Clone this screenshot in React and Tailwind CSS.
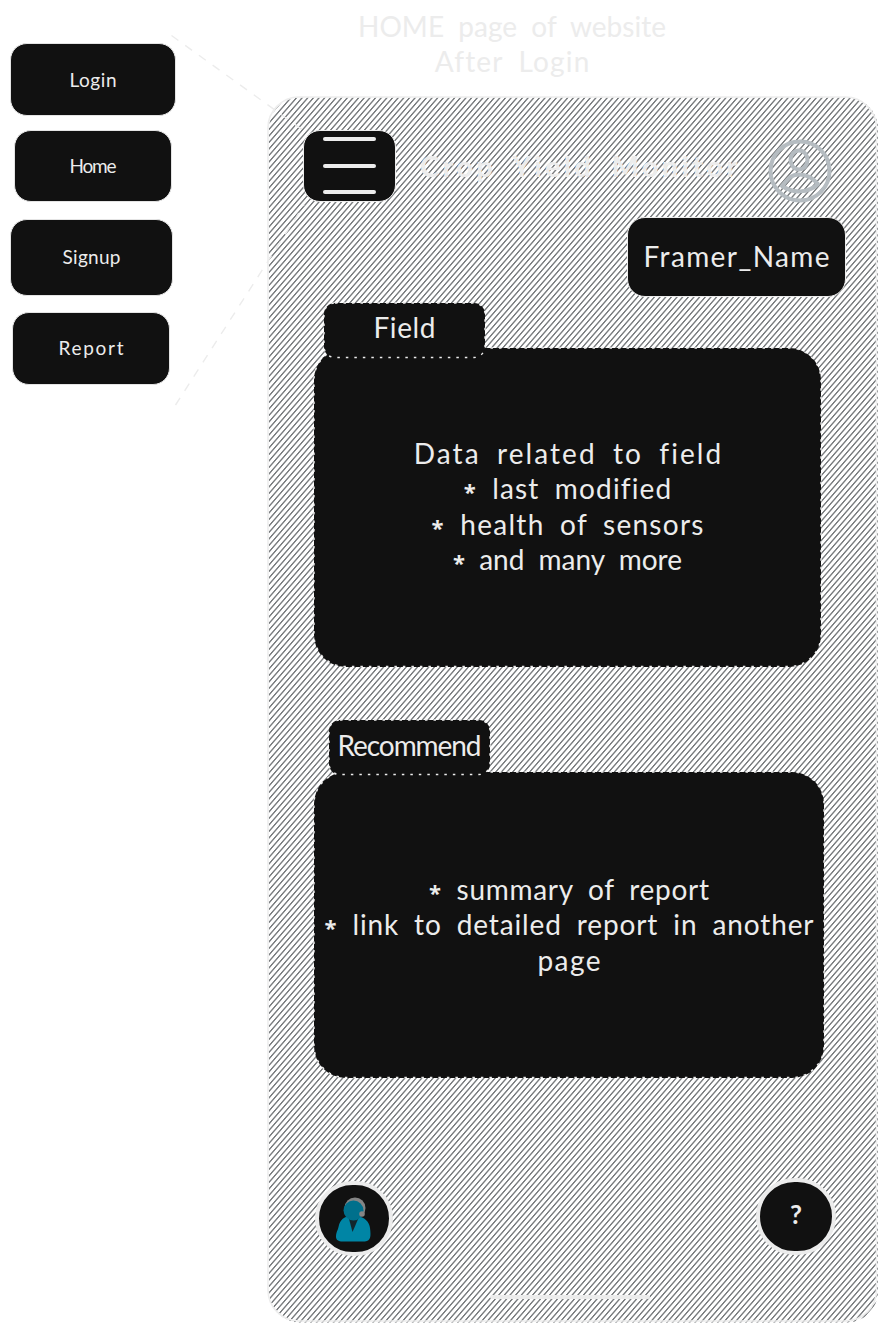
import React from "react";

// Letter spacing is computed so each label fills its hand-lettered width.
function Line({ children, w, className = "" }) {
  const ref = React.useRef(null);
  const [ls, setLs] = React.useState(0);
  React.useLayoutEffect(() => {
    const natural = ref.current.getBoundingClientRect().width;
    setLs((w - natural) / (children.length - 1));
  }, []);
  const star = children.startsWith("*");
  return (
    <span className={"block whitespace-pre " + className}>
      <span ref={ref} className="inline-block [word-spacing:7px]" style={{ letterSpacing: ls, marginRight: -ls }}>
        {star && <span className="align-[-1px] font-['Open_Sans',sans-serif] text-[22px] font-bold leading-[0]">*</span>}
        {star ? children.slice(1) : children}
      </span>
    </span>
  );
}

const tabs = [
  { t: "Login", w: 47, c: "ml-[10px] mt-[43px] h-[73px] w-[166px]" },
  { t: "Home", w: 47, c: "ml-[14px] mt-[14px] h-[72px] w-[158px]" },
  { t: "Signup", w: 58, c: "ml-[10px] mt-[17px] h-[77px] w-[163px] pb-[2px]" },
  { t: "Report", w: 65, c: "ml-[12px] mt-[16px] h-[73px] w-[158px] pb-[2px]" },
];

function Hatch() {
  return (
    <svg className="absolute inset-0 -z-10" width="613" height="1230" viewBox="0 0 613 1230">
      <defs>
        <pattern id="hatch" width="5.65" height="20" patternUnits="userSpaceOnUse" patternTransform="skewX(-41)">
          <path d="M2.8 0V20" stroke="#11161a" strokeWidth="1.05" />
        </pattern>
      </defs>
      <rect x="2" y="1.5" width="609" height="1225" rx="31" fill="url(#hatch)" />
      <rect x="1" y="1" width="608.5" height="1224" rx="31" fill="none" stroke="#ededed" strokeWidth="1.6" />
    </svg>
  );
}

export default function App() {
  return (
    <div className="relative flex h-[1330px] w-[886px] overflow-hidden bg-white font-['Lato',sans-serif] text-[#ececec]">
      <nav className="w-[267px] shrink-0">
        {tabs.map((b) => (
          <button key={b.t} className={"flex items-center justify-center rounded-[17px] border border-[#e4e4e4] bg-[#111] text-[19px] leading-6 " + b.c}>
            <Line w={b.w}>{b.t}</Line>
          </button>
        ))}
      </nav>

      <div className="w-[612px] shrink-0">
        <h1 className="flex h-[96px] w-[490px] flex-col items-center pt-[9px] text-[28px] leading-[35px]">
          <Line w={308}>HOME page of website</Line>
          <Line w={154}>After Login</Line>
        </h1>

        <main className="relative isolate h-[1228px] w-[612px]">
          <Hatch />
          <header className="flex pl-[36px] pt-[34px]">
            <button className="flex h-[72px] w-[93px] flex-col items-center justify-between rounded-[17px] border border-[#ededed] bg-[#111] pb-[7px] pt-[6px]">
              <i className="h-[4px] w-[53px] rounded-full bg-[#ececec]" />
              <i className="h-[4px] w-[53px] rounded-full bg-[#ececec]" />
              <i className="h-[4px] w-[53px] rounded-full bg-[#ececec]" />
            </button>
            <h2 className="ml-[24px] mt-[18px] w-[320px] text-[29px] font-bold leading-[35px]">
              <Line w={317}>Crop Yield Monitor</Line>
            </h2>
            <svg className="ml-[28px] mt-[9px]" width="64" height="64" viewBox="0 0 64 64" fill="none" stroke="#b5bcc1" strokeWidth="4">
              <circle cx="32" cy="32" r="29.5" />
              <ellipse cx="31" cy="21" rx="8.5" ry="9.500" />
              <path d="M14 47C22 37 25 35.500 31 35.500C38 35.500 45 39 50 45C40 54.500 25 54.500 14 47Z" strokeLinejoin="round" />
            </svg>
          </header>

          <div className="ml-[360px] mt-[14px] flex h-[80px] w-[219px] items-center justify-center rounded-[18px] border border-[#ededed] bg-[#111] pb-[2px] text-[28px] leading-[35px]">
            <Line w={186}>Framer_Name</Line>
          </div>

          <section className="relative pt-[6px]">
            <div className="relative z-10 ml-[57px] flex h-[55px] w-[161px] justify-center rounded-[11px] bg-[#111] pt-[7px] text-[28px] leading-[35px]">
              <Line w={62}>Field</Line>
              <Dots w={161} h={55} r={11} />
            </div>
            <div className="relative -mt-[10px] ml-[47px] flex h-[319px] w-[507px] flex-col items-center justify-center rounded-[32px] bg-[#111] pb-[2px] text-[28px] leading-[35.3px]">
              <Line w={307}>Data related to field</Line>
              <Line w={207}>* last modified</Line>
              <Line w={272}>* health of sensors</Line>
              <Line w={229}>* and many more</Line>
              <Dots w={507} h={319} r={32} />
            </div>
          </section>

          <section className="relative pt-[53px]">
            <div className="relative z-10 ml-[62px] flex h-[55px] w-[161px] justify-center rounded-[11px] bg-[#111] pt-[8px] text-[28px] leading-[35px]">
              <Line w={144}>Recommend</Line>
              <Dots w={161} h={55} r={11} />
            </div>
            <div className="relative -mt-[3px] ml-[47px] flex h-[306px] w-[510px] flex-col items-center justify-center rounded-[32px] bg-[#111] text-[28px] leading-[35.3px]">
              <Line w={280}>* summary of report</Line>
              <Line w={489}>* link to detailed report in another</Line>
              <Line w={63}>page</Line>
              <Dots w={510} h={306} r={32} />
            </div>
          </section>

          <footer className="flex items-start justify-between pl-[48px] pr-[43px] pt-[100px]">
            <button className="mt-[3px] flex h-[75px] w-[78px] items-center justify-center rounded-full border-4 border-[#ececec] bg-[#111]">
              <Agent />
            </button>
            <button className="flex h-[77px] w-[80px] items-center justify-center rounded-full border-4 border-[#ececec] bg-[#111] pb-[4px] text-[26px] font-bold leading-[35px]">?</button>
          </footer>
          <div className="ml-[223px] mt-[39px] h-[4px] w-[160px] rounded-full bg-[#ececec]" />
        </main>
      </div>

      <svg className="pointer-events-none absolute left-0 top-0" width="320" height="420" fill="none" stroke="#ececec" strokeWidth="1.4" strokeDasharray="8.5 8.4">
        <path d="M171.500 35.500L304 131" />
        <path d="M175.500 405L304 205" />
      </svg>
    </div>
  );
}

function Dots({ w, h, r }) {
  return (
    <svg className="absolute inset-0 overflow-visible" width={w} height={h}>
      <rect x="0" y="0" width={w} height={h - 0.5} rx={r} fill="none" stroke="#ededed" strokeWidth="1.4" strokeDasharray="2.500 6" />
    </svg>
  );
}

function Agent() {
  return (
    <svg width="36" height="48" viewBox="0 0 36 48">
      <circle cx="19" cy="13" r="10.500" fill="#858585" />
      <path d="M0 42C0 37 2 35 2.500 32C4 24 9 21.500 13 21.500H23C28 22 33.500 27 34 33C35 41 35 46 29 46.500H8C3 47 0 45 0 42Z" fill="#0085a5" />
      <path d="M12.500 22H23L16.500 37Z" fill="#12262d" />
      <circle cx="17.500" cy="15.500" r="10" fill="#00708c" />
      <circle cx="26" cy="19" r="2.800" fill="#858585" />
    </svg>
  );
}
